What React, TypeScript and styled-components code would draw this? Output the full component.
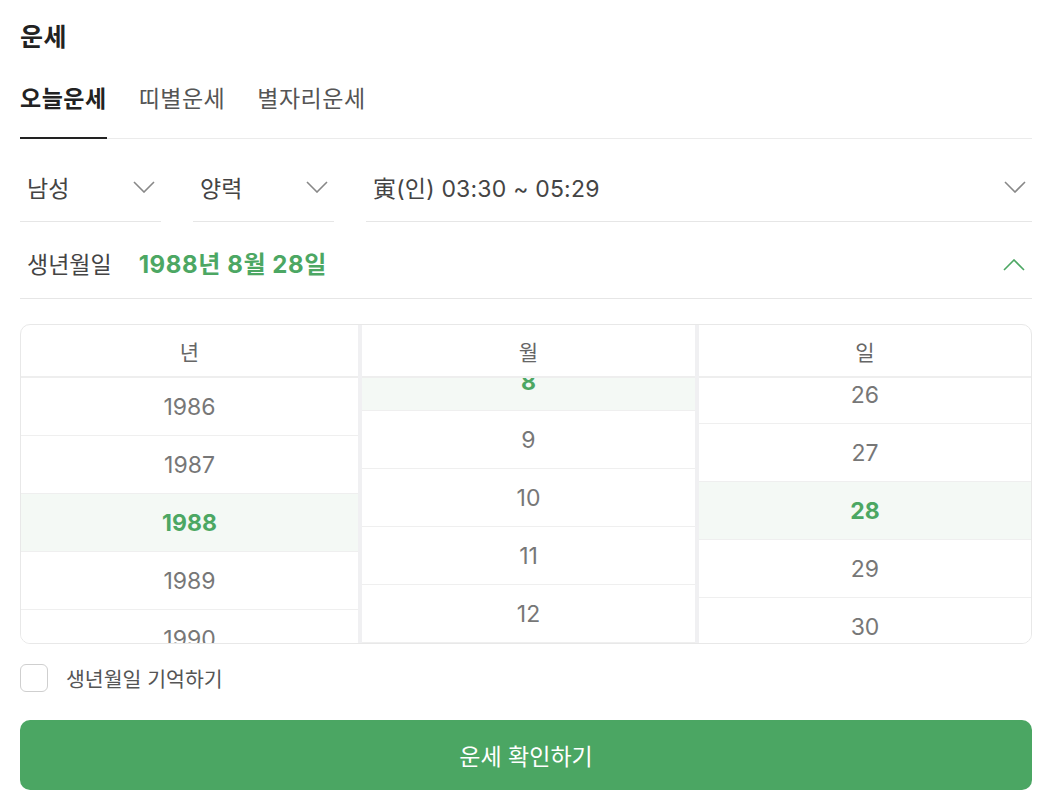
import React from "react";
import styled, { createGlobalStyle } from "styled-components";

const GREEN = "#4ca763";

const Global = createGlobalStyle`
  html, body { margin: 0; padding: 0; background: #fff; }
  body { font-family: Inter, "Noto Sans CJK KR", "Noto Sans", sans-serif; color: #222; }
  * { box-sizing: border-box; }
`;

const Page = styled.div`
  padding: 20px 26px 0 20px;
  display: flex;
  flex-direction: column;
`;

const Title = styled.h1`
  margin: 0;
  font-size: 25px;
  line-height: 34px;
  font-weight: 700;
  color: #222;
  letter-spacing: 0.6px;
`;

const TabBar = styled.div`
  display: flex;
  gap: 32px;
  border-bottom: 1px solid #ebebeb;
`;

const Tab = styled.div<{ $active?: boolean }>`
  padding-top: 30px;
  line-height: 30px;
  padding-bottom: 23px;
  font-size: 23px;
  letter-spacing: 0.5px;
  font-weight: ${(p) => (p.$active ? 700 : 400)};
  color: ${(p) => (p.$active ? "#222" : "#555")};
  border-bottom: 2px solid ${(p) => (p.$active ? "#222" : "transparent")};
  margin-bottom: -1px;
`;

const SelectRow = styled.div`
  display: flex;
  gap: 32px;
  margin-top: 16px;
`;

const Select = styled.div<{ $grow?: boolean }>`
  display: flex;
  align-items: center;
  justify-content: space-between;
  height: 67px;
  padding: 0 6px 2px 7px;
  border-bottom: 1px solid #e6e6e6;
  width: ${(p) => (p.$grow ? "auto" : "141px")};
  flex: ${(p) => (p.$grow ? 1 : "none")};
  font-size: 23px;
  letter-spacing: 0.2px;
  color: #444;
`;

const BirthRow = styled.div`
  display: flex;
  align-items: center;
  padding: 28px 7px 18px 7px;
  line-height: 30px;
  border-bottom: 1px solid #e6e6e6;
`;

const BirthLabel = styled.span`
  font-size: 23px;
  color: #444;
`;

const BirthValue = styled.span`
  margin-left: 27px;
  font-size: 24px;
  font-weight: 700;
  color: ${GREEN};
  letter-spacing: 0.6px;
  flex: 1;
`;

const Picker = styled.div`
  margin-top: 25px;
  height: 320px;
  border: 1px solid #e8e8e8;
  border-radius: 10px;
  display: grid;
  grid-template-columns: 337px 4px 333px 4px 1fr;
  overflow: hidden;
`;

const Divider = styled.div`
  background: #f0f0f2;
`;

const Column = styled.div`
  display: flex;
  flex-direction: column;
  min-width: 0;
  min-height: 0;
`;

const ColHeader = styled.div`
  height: 53px;
  display: flex;
  align-items: center;
  justify-content: center;
  font-size: 21px;
  color: #666;
  border-bottom: 2px solid #eeeeee;
  flex: none;
`;

const Viewport = styled.div`
  flex: 1;
  overflow: hidden;
  position: relative;
`;

const List = styled.div<{ $offset: number }>`
  margin-top: ${(p) => p.$offset}px;
`;

const Item = styled.div<{ $selected?: boolean }>`
  height: 58px;
  display: flex;
  align-items: center;
  justify-content: center;
  font-size: 23px;
  border-bottom: 1px solid #efefef;
  color: ${(p) => (p.$selected ? GREEN : "#777")};
  font-weight: ${(p) => (p.$selected ? 700 : 400)};
  background: ${(p) => (p.$selected ? "#f4f9f5" : "#fff")};
`;

const CheckRow = styled.label`
  display: flex;
  align-items: center;
  gap: 18px;
  margin-top: 20px;
  height: 28px;
`;

const Box = styled.span`
  width: 28px;
  height: 28px;
  border: 1.5px solid #cfcfcf;
  border-radius: 6px;
  background: #fff;
`;

const CheckLabel = styled.span`
  font-size: 20.5px;
  color: #555;
`;

const Button = styled.button`
  margin-top: 28px;
  height: 70px;
  border: none;
  border-radius: 10px;
  background: #4ba663;
  color: #fff;
  font-family: inherit;
  font-size: 23px;
`;

const Chevron = ({ up, color }: { up?: boolean; color: string }) => (
  <svg width="22" height="12" viewBox="0 0 22 12" fill="none">
    <path
      d={up ? "M1 11 L11 1 L21 11" : "M1 1 L11 11 L21 1"}
      stroke={color}
      strokeWidth="1.6"
    />
  </svg>
);

type Col = { title: string; items: number[]; selected: number; offset: number };

const columns: Col[] = [
  { title: "년", items: [1986, 1987, 1988, 1989, 1990], selected: 1988, offset: 0 },
  { title: "월", items: [8, 9, 10, 11, 12], selected: 8, offset: -25 },
  { title: "일", items: [26, 27, 28, 29, 30], selected: 28, offset: -12 },
];

export default function App() {
  return (
    <>
      <Global />
      <Page>
        <Title>운세</Title>
        <TabBar>
          <Tab $active>오늘운세</Tab>
          <Tab>띠별운세</Tab>
          <Tab>별자리운세</Tab>
        </TabBar>
        <SelectRow>
          <Select>
            남성 <Chevron color="#888" />
          </Select>
          <Select>
            양력 <Chevron color="#888" />
          </Select>
          <Select $grow>
            寅(인) 03:30 ~ 05:29 <Chevron color="#888" />
          </Select>
        </SelectRow>
        <BirthRow>
          <BirthLabel>생년월일</BirthLabel>
          <BirthValue>1988년 8월 28일</BirthValue>
          <Chevron up color={GREEN} />
        </BirthRow>
        <Picker>
          {columns.map((c, i) => (
            <React.Fragment key={c.title}>
              {i > 0 && <Divider />}
              <Column>
                <ColHeader>{c.title}</ColHeader>
                <Viewport>
                  <List $offset={c.offset}>
                    {c.items.map((n) => (
                      <Item key={n} $selected={n === c.selected}>
                        {n}
                      </Item>
                    ))}
                  </List>
                </Viewport>
              </Column>
            </React.Fragment>
          ))}
        </Picker>
        <CheckRow>
          <Box />
          <CheckLabel>생년월일 기억하기</CheckLabel>
        </CheckRow>
        <Button>운세 확인하기</Button>
      </Page>
    </>
  );
}
